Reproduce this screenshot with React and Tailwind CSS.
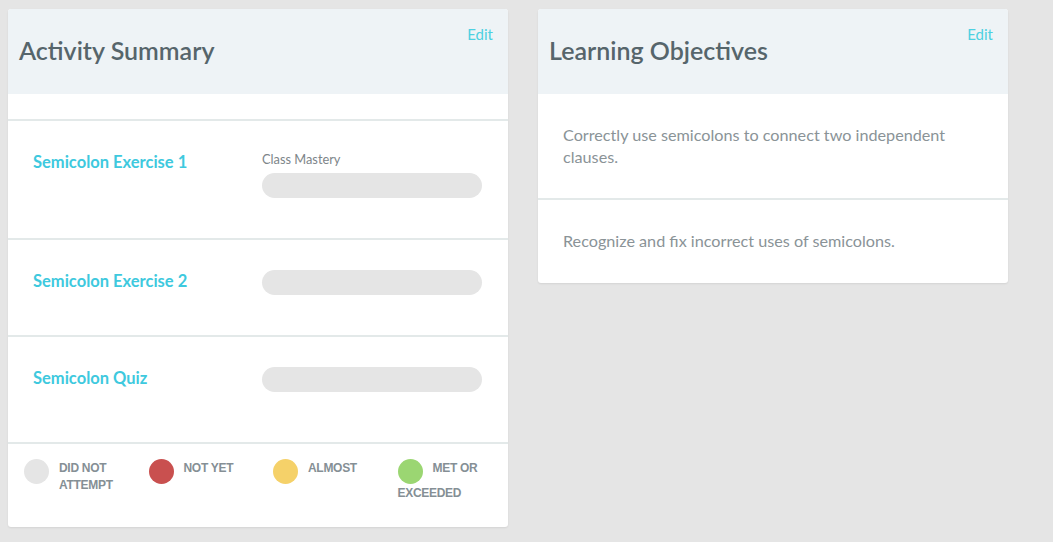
import React from "react";

const activities = [
  { title: "Semicolon Exercise 1", label: "Class Mastery", h: "h-[119px]" },
  { title: "Semicolon Exercise 2", h: "h-[97px]" },
  { title: "Semicolon Quiz", h: "h-[107px]" },
];

const legend = [
  { color: "bg-[#e5e5e5]", lines: ["DID NOT", "ATTEMPT"] },
  { color: "bg-[#c9504f]", lines: ["NOT YET"] },
  { color: "bg-[#f5d169]", lines: ["ALMOST"] },
  { color: "bg-[#9bd672]", lines: ["MET OR"], below: "EXCEEDED" },
];

const objectives = [
  {
    text: "Correctly use semicolons to connect two independent clauses.",
    h: "h-[106px]",
  },
  { text: "Recognize and fix incorrect uses of semicolons.", h: "h-[83px]" },
];

const CardHeader = ({ title }) => (
  <div className="relative h-[85px] bg-[#eef3f6] pl-[11px] pt-[24px]">
    <h2 className="text-[25px] leading-[34px] font-semibold text-[#56656b]">
      {title}
    </h2>
    <a className="absolute top-[14px] right-[15px] text-[15px] text-[#4dd0e1]">
      Edit
    </a>
  </div>
);

const App = () => {
  return (
    <div
      className="min-h-screen bg-[#e5e5e5] flex items-start gap-[30px] pl-[8px] pt-[9px]"
      style={{ fontFamily: "Lato, 'Noto Sans', sans-serif" }}
    >
      {/* activity summary */}
      <div className="w-[500px] bg-white rounded-[3px] shadow-[0_1px_2px_rgba(0,0,0,0.08)] overflow-hidden">
        <CardHeader title="Activity Summary" />
        <div className="h-[27px] border-b-2 border-[#e3e9e9]" />
        {activities.map((a, i) => (
          <div
            key={i}
            className={`${a.h} flex items-start pt-[30px] pl-[25px] border-b-2 border-[#e3e9e9]`}
          >
            <div className="w-[229px] -mt-[1px] text-[16.5px] leading-[24px] font-bold text-[#3ec9de]">
              {a.title}
            </div>
            <div className="w-[220px]">
              {a.label && (
                <div className="text-[12.8px] leading-[14px] text-[#7d8589] mt-[1px] mb-[7px]">
                  {a.label}
                </div>
              )}
              <div className="h-[25px] rounded-full bg-[#e5e5e5]" />
            </div>
          </div>
        ))}
        <div
          className="flex pl-[16px] pt-[15px] h-[83px]"
          style={{ fontFamily: "'Liberation Sans', Arial, sans-serif" }}
        >
          {legend.map((l, i) => (
            <div key={i} className="w-[124.5px] shrink-0 pr-[30px]">
              <div className={`float-left w-[25px] h-[25px] rounded-full mr-[10px] ${l.color}`} />
              <div className="pt-[1px] text-[12px] leading-[17px] font-bold text-[#858f95] tracking-[-0.3px]">
                {l.lines.map((t, j) => (
                  <div key={j}>{t}</div>
                ))}
                {l.below && <div className="clear-left pt-[1px]">{l.below}</div>}
              </div>
            </div>
          ))}
        </div>
      </div>

      {/* learning objectives */}
      <div className="w-[470px] bg-white rounded-[3px] shadow-[0_1px_2px_rgba(0,0,0,0.08)] overflow-hidden">
        <CardHeader title="Learning Objectives" />
        {objectives.map((o, i) => (
          <div
            key={i}
            className={`${o.h} pl-[25px] pr-[50px] pt-[30px] text-[16.2px] leading-[22px] text-[#8a9397] ${
              i === 0 ? "border-b-2 border-[#e3e9e9]" : ""
            }`}
          >
            {o.text}
          </div>
        ))}
      </div>
    </div>
  );
};

export default App;
